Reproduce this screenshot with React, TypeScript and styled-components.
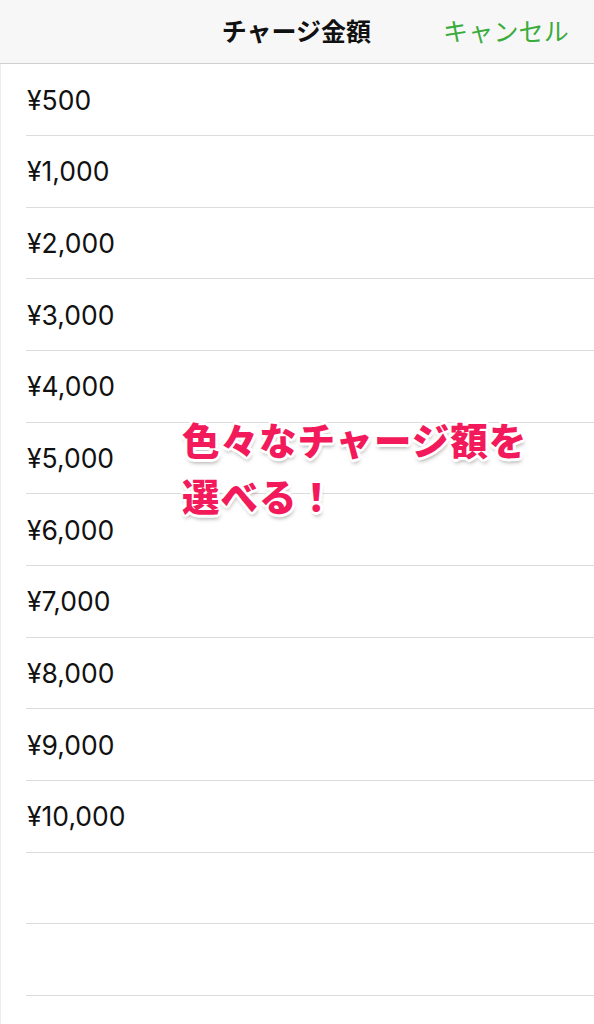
import React from "react";
import styled, { createGlobalStyle } from "styled-components";

const GlobalStyle = createGlobalStyle`
  html, body {
    margin: 0;
    padding: 0;
    background: #ffffff;
  }
  body {
    font-family: Inter, "Noto Sans CJK JP", "Noto Sans", sans-serif;
    -webkit-font-smoothing: antialiased;
  }
`;

const Page = styled.div`
  position: relative;
  width: 594px;
  height: 1024px;
  overflow: hidden;
  background: #ffffff;
  display: flex;
  flex-direction: column;
`;

const NavBar = styled.header`
  box-sizing: border-box;
  height: 64.4px;
  flex: none;
  display: grid;
  grid-template-columns: 1fr auto 1fr;
  align-items: center;
  background: #f7f7f7;
  border-bottom: 1px solid #cfcfcf;
  padding: 0 25px 4px 24px;
`;

const Title = styled.h1`
  grid-column: 2;
  margin: 0;
  font-family: "Noto Sans CJK JP", sans-serif;
  font-weight: 700;
  font-size: 25px;
  color: #111111;
`;

const CancelButton = styled.button`
  grid-column: 3;
  justify-self: end;
  border: none;
  background: none;
  padding: 0;
  font-family: "Noto Sans CJK JP", sans-serif;
  font-weight: 400;
  font-size: 25px;
  letter-spacing: 0.2px;
  color: #3aac3c;
  cursor: pointer;
`;

const List = styled.ul`
  flex: 1;
  list-style: none;
  margin: 0;
  padding: 0 0 0 25px;
  border-left: 1px solid #ececec;
`;

const Row = styled.li`
  box-sizing: border-box;
  height: 71.67px;
  display: flex;
  align-items: center;
  border-bottom: 1px solid #dcdcdc;
  font-family: Inter, "Liberation Sans", sans-serif;
  font-size: 26.5px;
  color: #111111;
  padding-left: 1px;
`;

const Callout = styled.div`
  position: absolute;
  left: 182px;
  top: 411px;
  font-family: "Noto Sans CJK JP", sans-serif;
  font-weight: 900;
  font-size: 37.5px;
  line-height: 56px;
  color: #f21a5a;
  letter-spacing: 1px;
  text-shadow:
    -3px 0 0 #fff, 3px 0 0 #fff, 0 -3px 0 #fff, 0 3px 0 #fff,
    -2px -2px 0 #fff, 2px -2px 0 #fff, -2px 2px 0 #fff, 2px 2px 0 #fff,
    1px 4px 4px rgba(0, 0, 0, 0.35);
`;

const amounts = [
  "¥500",
  "¥1,000",
  "¥2,000",
  "¥3,000",
  "¥4,000",
  "¥5,000",
  "¥6,000",
  "¥7,000",
  "¥8,000",
  "¥9,000",
  "¥10,000",
  "",
  "",
];

export default function App() {
  return (
    <Page>
      <GlobalStyle />
      <NavBar>
        <Title>チャージ金額</Title>
        <CancelButton>キャンセル</CancelButton>
      </NavBar>
      <List>
        {amounts.map((a, i) => (
          <Row key={i}>{a}</Row>
        ))}
      </List>
      <Callout>
        色々なチャージ額を
        <br />
        選べる！
      </Callout>
    </Page>
  );
}
